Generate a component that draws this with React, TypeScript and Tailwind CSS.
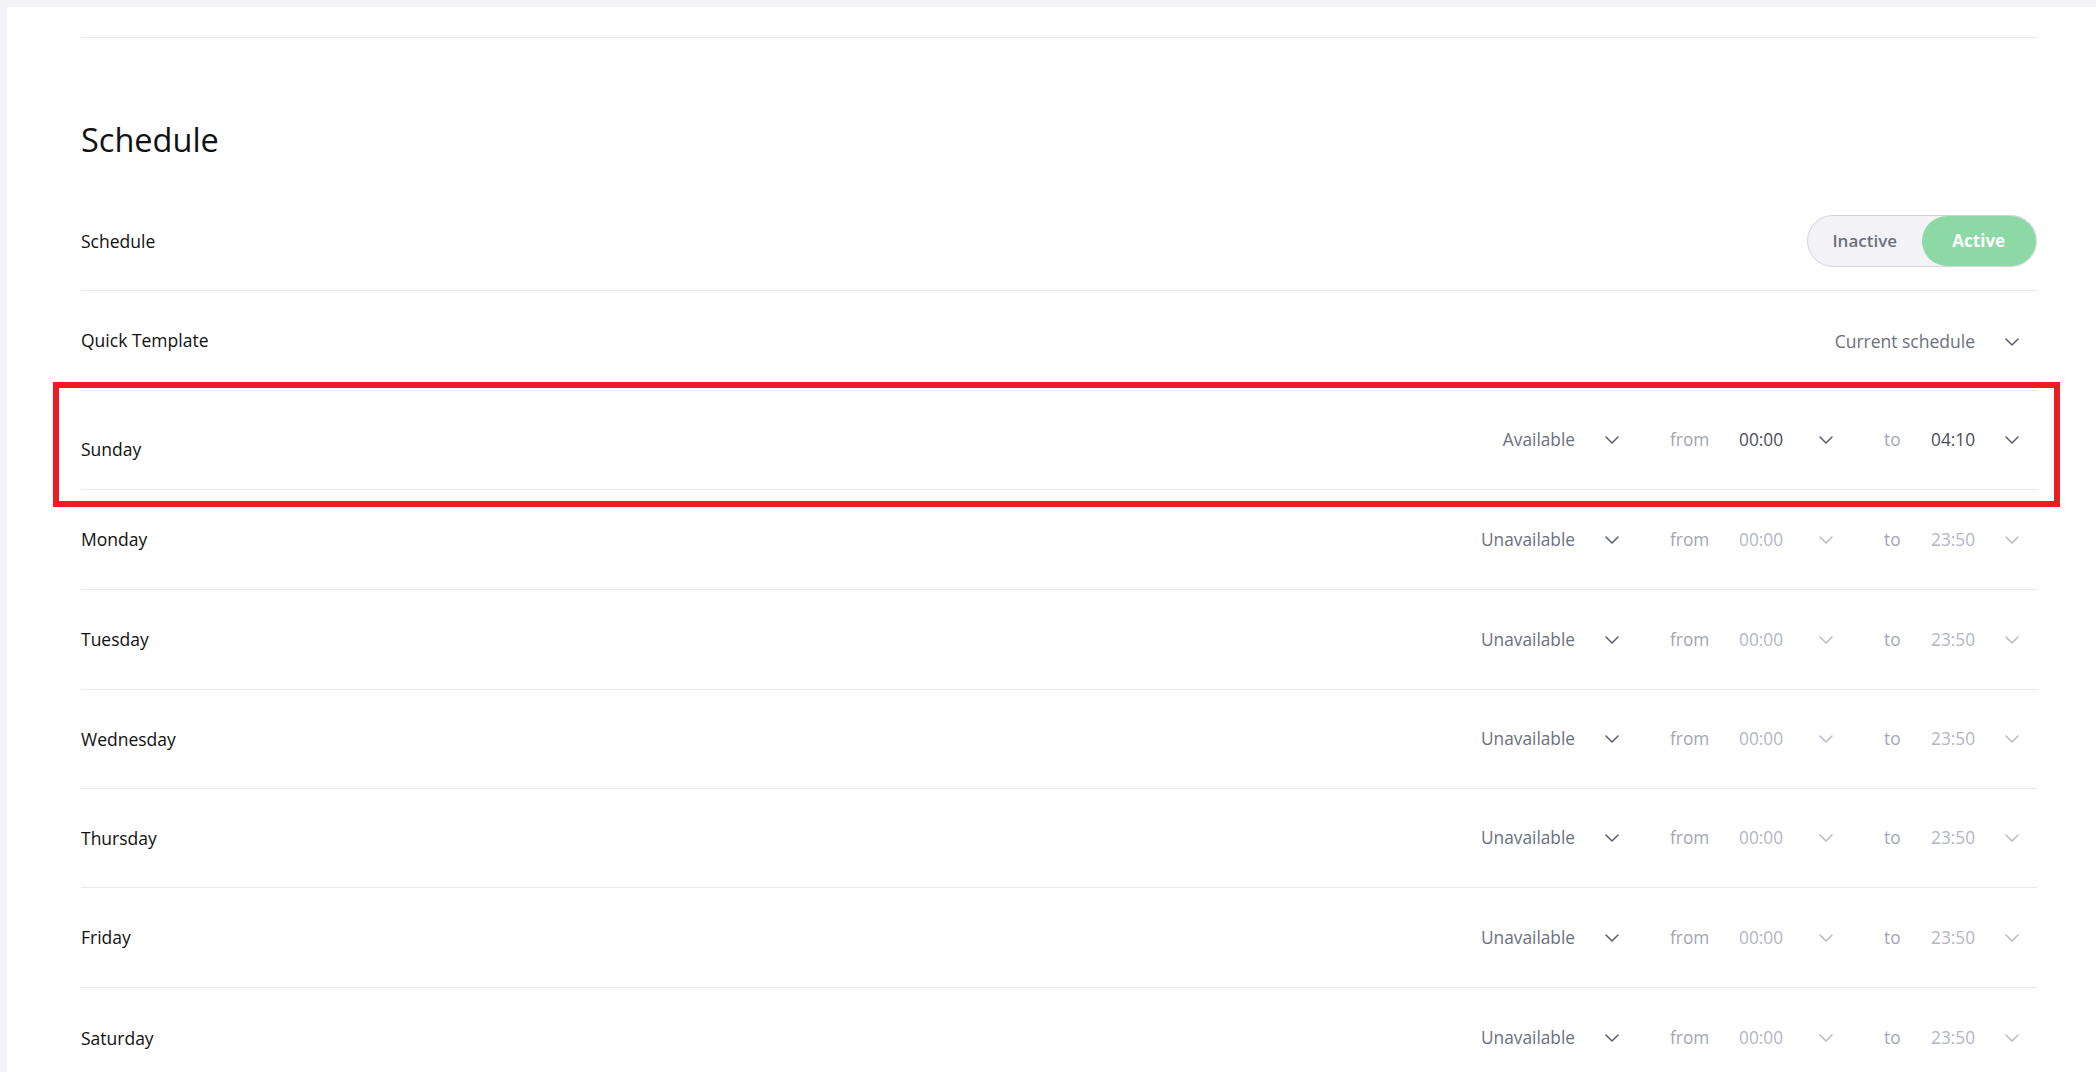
import React from "react";

function Chevron({ active }: { active: boolean }) {
  return (
    <svg
      width="14"
      height="8"
      viewBox="0 0 14 8"
      fill="none"
      className={active ? "text-[#5a5e6e]" : "text-[#b8bbc7]"}
    >
      <path d="M1 1l6 6 6-6" stroke="currentColor" strokeWidth="1.5" strokeLinecap="round" strokeLinejoin="round" />
    </svg>
  );
}

type Day = {
  name: string;
  status: string;
  from: string;
  to: string;
  active: boolean;
  h: string;
};

const days: Day[] = [
  { name: "Sunday", status: "Available", from: "00:00", to: "04:10", active: true, h: "h-[99px]" },
  { name: "Monday", status: "Unavailable", from: "00:00", to: "23:50", active: false, h: "h-[100px]" },
  { name: "Tuesday", status: "Unavailable", from: "00:00", to: "23:50", active: false, h: "h-[100px]" },
  { name: "Wednesday", status: "Unavailable", from: "00:00", to: "23:50", active: false, h: "h-[99px]" },
  { name: "Thursday", status: "Unavailable", from: "00:00", to: "23:50", active: false, h: "h-[99px]" },
  { name: "Friday", status: "Unavailable", from: "00:00", to: "23:50", active: false, h: "h-[100px]" },
];

function DayControls({ d }: { d: Day }) {
  const timeCls = d.active ? "text-[#4a4e5c]" : "text-[#b3b6c3]";
  return (
    <div className="flex items-center pr-[18px] text-[17.3px]">
      <span className="w-[120px] text-right text-[#6b7082]">{d.status}</span>
      <span className="ml-[30px] flex w-[14px]">
        <Chevron active={true} />
      </span>
      <span className="ml-[51px] w-[69px] text-[#a2a5b3]">from</span>
      <span className={"w-[80px] " + timeCls}>{d.from}</span>
      <span className="flex w-[14px]">
        <Chevron active={d.active} />
      </span>
      <span className="ml-[51px] w-[47px] text-[#a2a5b3]">to</span>
      <span className={"w-[74px] " + timeCls}>{d.to}</span>
      <span className="flex w-[14px]">
        <Chevron active={d.active} />
      </span>
    </div>
  );
}

export default function App() {
  return (
    <div
      className="relative h-[1072px] w-full overflow-hidden bg-[#f3f3f8] pl-[7px] pt-[7px]"
      style={{ fontFamily: '"Open Sans", "Noto Sans", sans-serif' }}
    >
      <div className="h-full bg-white pl-[74px] pr-[59px] pt-[30px]">
        <div className="border-t border-[#e8e8ee]" />
        <div className="flex h-[154px] items-start pt-[80px]">
          <h1 className="text-[32.5px] leading-[44px] font-normal text-[#111]">Schedule</h1>
        </div>

        {/* Schedule toggle row */}
        <div className="flex h-[99px] items-center justify-between border-b border-[#e8e8ee]">
          <span className="text-[17.5px] text-[#111]">Schedule</span>
          <div className="flex h-[52px] w-[230px] items-center rounded-full border border-[#d3d3da] bg-[#f3f3f7]">
            <span className="flex h-full w-[114px] items-center justify-center text-[17px] font-semibold text-[#6d707c]">
              Inactive
            </span>
            <span className="flex h-full w-[115px] items-center justify-center rounded-full bg-[#8cd9a6] text-[17px] font-bold text-white">
              Active
            </span>
          </div>
        </div>

        {/* Quick template row */}
        <div className="flex h-[100px] items-center justify-between border-b border-[#e8e8ee]">
          <span className="text-[17.5px] text-[#111]">Quick Template</span>
          <div className="flex items-center pr-[18px] pt-[2px] text-[17.5px]">
            <span className="text-[#6b7082]">Current schedule</span>
            <span className="ml-[30px] flex w-[14px]">
              <Chevron active={true} />
            </span>
          </div>
        </div>

        {days.map((d, i) => (
          <div
            key={d.name}
            className={"flex items-center justify-between border-b border-[#e8e8ee] " + d.h}
          >
            <span className={"text-[17.5px] text-[#111] " + (i === 0 ? "pt-[18px]" : "")}>{d.name}</span>
            <DayControls d={d} />
          </div>
        ))}

        <div className="flex h-[100px] items-center justify-between">
          <span className="text-[17.5px] text-[#111]">Saturday</span>
          <DayControls
            d={{ name: "Saturday", status: "Unavailable", from: "00:00", to: "23:50", active: false, h: "" }}
          />
        </div>
      </div>

      <div className="pointer-events-none absolute left-[53px] top-[382px] h-[125px] w-[2007px] border-[6px] border-[#ed1c24]" />
    </div>
  );
}
